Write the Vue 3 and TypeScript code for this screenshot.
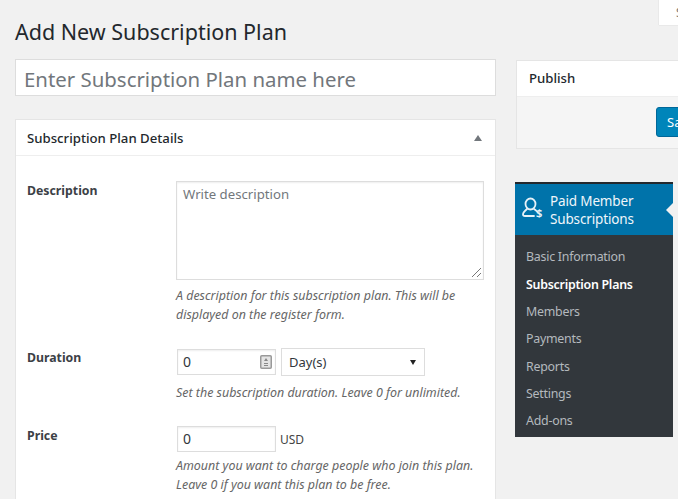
<script setup lang="ts">
const menu: { label: string; active?: boolean }[] = [
  { label: 'Basic Information' },
  { label: 'Subscription Plans', active: true },
  { label: 'Members' },
  { label: 'Payments' },
  { label: 'Reports' },
  { label: 'Settings' },
  { label: 'Add-ons' },
]
</script>

<template>
  <div class="page">
    <div class="tabbar"><div class="screen-tab">Screen Options</div></div>
    <div class="columns">
      <main class="main">
        <h1 class="title">Add New Subscription Plan</h1>
        <div class="name-input">Enter Subscription Plan name here</div>
        <section class="box">
          <header class="box-head">
            <span>Subscription Plan Details</span>
            <span class="caret-up"></span>
          </header>
          <div class="box-body">
            <div class="row row-desc">
              <label class="label">Description</label>
              <div class="field">
                <div class="textarea">
                  Write description
                  <svg class="grip" width="11" height="11" viewBox="0 0 11 11">
                    <path d="M1 10L10 1M6 10L10 6" stroke="#777" stroke-width="1" fill="none" />
                  </svg>
                </div>
                <p class="help">A description for this subscription plan. This will be displayed on the register form.</p>
              </div>
            </div>
            <div class="row row-dur">
              <label class="label">Duration</label>
              <div class="field">
                <div class="controls">
                  <div class="input num">
                    0
                    <svg class="spin" width="12" height="14" viewBox="0 0 12 14">
                      <rect x="0.75" y="0.75" width="10.5" height="12.5" rx="1" fill="#e4e4e4" stroke="#999" stroke-width="1.5" />
                      <path d="M6 3L8 6H4ZM4 8H8V9H4ZM4 10H8V11H4Z" fill="#888" />
                    </svg>
                  </div>
                  <div class="select">Day(s)<span class="caret-down"></span></div>
                </div>
                <p class="help">Set the subscription duration. Leave 0 for unlimited.</p>
              </div>
            </div>
            <div class="row row-price">
              <label class="label">Price</label>
              <div class="field">
                <div class="controls">
                  <div class="input">0</div>
                  <span class="usd">USD</span>
                </div>
                <p class="help">Amount you want to charge people who join this plan. Leave 0 if you want this plan to be free.</p>
              </div>
            </div>
          </div>
        </section>
      </main>
      <aside class="side">
        <section class="publish">
          <header class="publish-head">Publish</header>
          <div class="publish-foot"><button class="save">Save Plan</button></div>
        </section>
        <nav class="pms">
          <div class="pms-head">
            <svg class="pms-icon" width="22" height="22" viewBox="0 0 22 22">
              <ellipse cx="8.500" cy="7" rx="5" ry="5.500" fill="none" stroke="#e6f1f7" stroke-width="1.800" />
              <path d="M5 12C2.500 14 1 16 1 17.500C1 18.600 1.800 19 3 19H12M12 12C13 12.600 13.800 13.200 14.500 14" fill="none" stroke="#e6f1f7" stroke-width="1.800" stroke-linecap="round" />
              <text x="14" y="19.500" class="dollar">$</text>
            </svg>
            <span class="pms-name">Paid Member Subscriptions</span>
            <span class="notch"></span>
          </div>
          <ul class="pms-list">
            <li v-for="item in menu" :key="item.label" :class="{ active: item.active }">{{ item.label }}</li>
          </ul>
        </nav>
      </aside>
    </div>
  </div>
</template>

<style>
html, body { margin: 0; background: #f1f1f1; overflow: hidden; }
</style>

<style scoped>
.page {
  width: 678px;
  height: 499px;
  overflow: hidden;
  background: #f1f1f1;
  font-family: "Noto Sans", "Open Sans", sans-serif;
  color: #444;
  font-size: 13px;
}
.tabbar { height: 0; display: flex; justify-content: flex-end; }
.screen-tab {
  flex: none;
  width: 19px;
  height: 25px;
  background: #fff;
  box-shadow: 0 0 1px rgba(0,0,0,.2);
  color: #777;
  font-size: 12px;
  line-height: 25px;
  padding-left: 17px;
  margin-right: -17px;
  white-space: nowrap;
  overflow: hidden;
  box-sizing: content-box;
}
.columns { display: flex; padding-left: 15px; align-items: flex-start; }
.main { width: 481px; flex: none; }
.title {
  margin: 0;
  padding-top: 17px;
  font-size: 21.500px;
  font-weight: 400;
  line-height: 30px;
  color: #23282d;
}
.name-input {
  margin-top: 12px;
  height: 35px;
  line-height: 38px;
  background: #fff;
  border: 1px solid #ddd;
  padding-left: 8px;
  font-size: 20.400px;
  color: #72777c;
  white-space: nowrap;
}
.box {
  margin-top: 23px;
  background: #fff;
  border: 1px solid #e5e5e5;
  height: 400px;
}
.box-head {
  height: 35px;
  display: flex;
  align-items: center;
  justify-content: space-between;
  padding: 0 13px 0 11px;
  border-bottom: 1px solid #eee;
  font-size: 13.200px;
  font-weight: 500;
  color: #23282d;
}
.caret-up {
  width: 0; height: 0;
  border-left: 4px solid transparent;
  border-right: 4px solid transparent;
  border-bottom: 6px solid #72777c;
}
.box-body { padding: 25px 12px 0 11px; }
.row { display: flex; }
.label {
  width: 149px;
  flex: none;
  font-weight: 700;
  font-size: 12.300px;
  line-height: 20px;
  color: #3c4146;
}
.field { width: 308px; flex: none; }
.textarea {
  position: relative;
  height: 91px;
  border: 1px solid #ddd;
  padding: 3px 6px;
  width: 294px;
  font-size: 13.200px;
  line-height: 18px;
  color: #72777c;
  box-shadow: inset 0 1px 2px rgba(0,0,0,.07);
}
.grip { position: absolute; right: 1px; bottom: 1px; }
.help {
  margin: 6px 0 0;
  font-size: 12.430px;
  line-height: 19px;
  font-style: italic;
  color: #666;
}
.row-dur { margin-top: 24px; }
.row-dur .help { margin-top: 7px; }
.row-price { margin-top: 24px; }
.row-price .label { line-height: 20px; }
.row-price .help { margin-top: 5px; line-height: 18.500px; }
.controls { display: flex; align-items: center; gap: 5px; margin-left: 1px; }
.input {
  position: relative;
  height: 24px;
  border: 1px solid #ddd;
  padding-left: 5px;
  width: 92px;
  font-size: 14px;
  line-height: 24px;
  color: #32373c;
  box-shadow: inset 0 1px 2px rgba(0,0,0,.07);
}
.spin { position: absolute; right: 3px; top: 5px; }
.select {
  position: relative;
  height: 26px;
  border: 1px solid #ddd;
  padding-left: 7px;
  width: 135px;
  font-size: 13px;
  line-height: 27px;
  color: #32373c;
}
.caret-down {
  position: absolute;
  right: 8px;
  top: 11px;
  width: 0; height: 0;
  border-left: 3px solid transparent;
  border-right: 3px solid transparent;
  border-top: 5px solid #222;
}
.usd { font-size: 12px; margin-left: -1px; color: #444; }
.side { margin-left: 20px; width: 180px; flex: none; position: relative; }
.publish {
  margin-top: 60px;
  width: 200px;
  background: #fff;
  border: 1px solid #e5e5e5;
}
.publish-head {
  height: 35px;
  line-height: 35px;
  padding-left: 12px;
  font-size: 13.200px;
  font-weight: 500;
  color: #23282d;
  border-bottom: 1px solid #eee;
}
.publish-foot {
  height: 51px;
  background: #f5f5f5;
  padding: 10px 0 0 139px;
  box-sizing: border-box;
}
.save {
  height: 30px;
  padding: 0 10px;
  background: #0085ba;
  border: 1px solid #006799;
  border-radius: 3px;
  color: #fff;
  font: 13px "Noto Sans", sans-serif;
  white-space: nowrap;
}
.pms {
  margin: 33px 0 0 -1px;
  width: 158px;
  background: #32373c;
  border-top: 2px solid #23282d;
}
.pms-head {
  position: relative;
  display: flex;
  align-items: center;
  height: 51px;
  background: #0073aa;
  padding-left: 7px;
  color: #fff;
}
.pms-icon { flex: none; margin-top: -4px; }
.dollar { font-size: 11px; font-weight: 700; fill: #e6f1f7; font-family: "Noto Sans", sans-serif; }
.pms-name { margin-left: 6px; font-size: 13.500px; line-height: 18px; letter-spacing: -.15px; color: #f0f6fa; }
.notch {
  position: absolute;
  right: 0;
  top: 19px;
  width: 0; height: 0;
  border-top: 7px solid transparent;
  border-bottom: 7px solid transparent;
  border-right: 7px solid #f1f1f1;
}
.pms-list {
  list-style: none;
  margin: 0;
  padding: 8.400px 0 3px;
}
.pms-list li {
  height: 27.300px;
  line-height: 27.300px;
  padding-left: 11px;
  font-size: 12.400px;
  letter-spacing: -.25px;
  color: #b4b9be;
}
.pms-list li.active { color: #fff; font-weight: 600; }
</style>
